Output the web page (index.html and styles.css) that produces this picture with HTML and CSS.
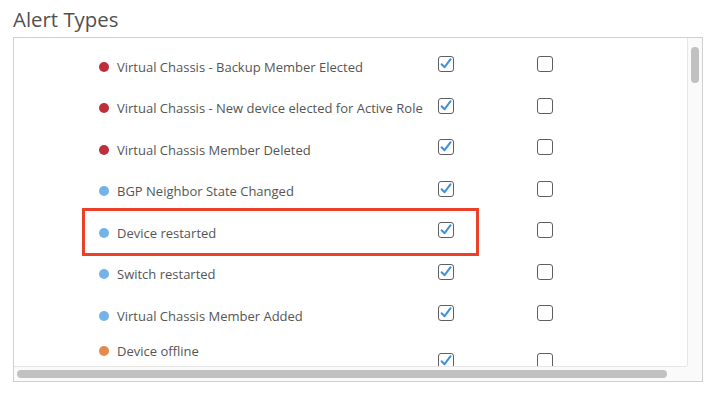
FILE: index.html
```html
<!DOCTYPE html>
<html lang="en">
<head>
    <meta charset="UTF-8">
    <meta name="viewport" content="width=device-width, initial-scale=1.0">
    <title>Alert Types</title>
    <link rel="stylesheet" href="styles.css">
</head>
<body>
    <h1 class="title">Alert Types</h1>

    <div class="panel">
        <div class="list">
            <div class="row">
                <span class="dot dot-red"></span>
                <span class="label">Virtual Chassis - Backup Member Elected</span>
                <span class="box checked"><svg viewBox="0 0 16 16"><rect x="0.5" y="0.5" width="15" height="15" rx="2.5"/><path d="M3.6 8.2 L6.6 11.2 L12.6 3.2"/></svg></span>
                <span class="box"><svg viewBox="0 0 16 16"><rect x="0.5" y="0.5" width="15" height="15" rx="2.5"/></svg></span>
            </div>
            <div class="row">
                <span class="dot dot-red"></span>
                <span class="label">Virtual Chassis - New device elected for Active Role</span>
                <span class="box checked"><svg viewBox="0 0 16 16"><rect x="0.5" y="0.5" width="15" height="15" rx="2.5"/><path d="M3.6 8.2 L6.6 11.2 L12.6 3.2"/></svg></span>
                <span class="box"><svg viewBox="0 0 16 16"><rect x="0.5" y="0.5" width="15" height="15" rx="2.5"/></svg></span>
            </div>
            <div class="row">
                <span class="dot dot-red"></span>
                <span class="label">Virtual Chassis Member Deleted</span>
                <span class="box checked"><svg viewBox="0 0 16 16"><rect x="0.5" y="0.5" width="15" height="15" rx="2.5"/><path d="M3.6 8.2 L6.6 11.2 L12.6 3.2"/></svg></span>
                <span class="box"><svg viewBox="0 0 16 16"><rect x="0.5" y="0.5" width="15" height="15" rx="2.5"/></svg></span>
            </div>
            <div class="row">
                <span class="dot dot-blue"></span>
                <span class="label">BGP Neighbor State Changed</span>
                <span class="box checked"><svg viewBox="0 0 16 16"><rect x="0.5" y="0.5" width="15" height="15" rx="2.5"/><path d="M3.6 8.2 L6.6 11.2 L12.6 3.2"/></svg></span>
                <span class="box"><svg viewBox="0 0 16 16"><rect x="0.5" y="0.5" width="15" height="15" rx="2.5"/></svg></span>
            </div>
            <div class="row highlighted">
                <span class="dot dot-blue"></span>
                <span class="label">Device restarted</span>
                <span class="box checked"><svg viewBox="0 0 16 16"><rect x="0.5" y="0.5" width="15" height="15" rx="2.5"/><path d="M3.6 8.2 L6.6 11.2 L12.6 3.2"/></svg></span>
                <span class="box"><svg viewBox="0 0 16 16"><rect x="0.5" y="0.5" width="15" height="15" rx="2.5"/></svg></span>
                <span class="highlight"></span>
            </div>
            <div class="row">
                <span class="dot dot-blue"></span>
                <span class="label">Switch restarted</span>
                <span class="box checked"><svg viewBox="0 0 16 16"><rect x="0.5" y="0.5" width="15" height="15" rx="2.5"/><path d="M3.6 8.2 L6.6 11.2 L12.6 3.2"/></svg></span>
                <span class="box"><svg viewBox="0 0 16 16"><rect x="0.5" y="0.5" width="15" height="15" rx="2.5"/></svg></span>
            </div>
            <div class="row">
                <span class="dot dot-blue"></span>
                <span class="label">Virtual Chassis Member Added</span>
                <span class="box checked"><svg viewBox="0 0 16 16"><rect x="0.5" y="0.5" width="15" height="15" rx="2.5"/><path d="M3.6 8.2 L6.6 11.2 L12.6 3.2"/></svg></span>
                <span class="box"><svg viewBox="0 0 16 16"><rect x="0.5" y="0.5" width="15" height="15" rx="2.5"/></svg></span>
            </div>
            <div class="row row-last">
                <span class="dot dot-orange"></span>
                <span class="label">Device offline</span>
                <span class="box checked"><svg viewBox="0 0 16 16"><rect x="0.5" y="0.5" width="15" height="15" rx="2.5"/><path d="M3.6 8.2 L6.6 11.2 L12.6 3.2"/></svg></span>
                <span class="box"><svg viewBox="0 0 16 16"><rect x="0.5" y="0.5" width="15" height="15" rx="2.5"/></svg></span>
            </div>
        </div>

        <div class="vscroll"><div class="vthumb"></div></div>
        <div class="hscroll"><div class="hthumb"></div></div>
        <div class="corner"></div>
    </div>
</body>
</html>
```

FILE: styles.css
```css
body {
    margin: 0;
    background: #fff;
    font-family: "Open Sans", "Liberation Sans", sans-serif;
    color: #555;
}
.title {
    margin: 0 0 4px 13px;
    padding-top: 6px;
    font-size: 20.4px;
    line-height: 27px;
    font-weight: 400;
    color: #505050;
}
.panel {
    margin-left: 13px;
    width: 688px;
    height: 343px;
    border: 1px solid #d0d0d0;
    display: grid;
    grid-template-columns: 673px 15px;
    grid-template-rows: 328px 15px;
    overflow: hidden;
}
.list {
    padding: 10px 0 0 85px;
    overflow: hidden;
}
.row {
    position: relative;
    height: 41.5px;
    display: flex;
    align-items: center;
}
.dot {
    width: 10px;
    height: 10px;
    border-radius: 50%;
    margin-right: 8px;
    margin-bottom: 4px;
    flex: none;
}
.dot-red { background: #be2f3b; }
.dot-blue { background: #74b2ea; }
.dot-orange { background: #e38a4b; }
.label {
    width: 321px;
    font-size: 13px;
    line-height: 18px;
    margin-bottom: 4px;
    white-space: nowrap;
    flex: none;
}
.box {
    align-self: flex-start;
    margin-top: 8px;
    width: 16px;
    height: 16px;
    flex: none;
}
.box svg {
    display: block;
    width: 16px;
    height: 16px;
}
.box rect {
    fill: #fff;
    stroke: #5f5f5f;
    stroke-width: 1;
}
.box path {
    fill: none;
    stroke: #3f8fe0;
    stroke-width: 2;
    stroke-linecap: round;
    stroke-linejoin: round;
}
.box.checked {
    margin-right: 83px;
}
.row-last {
    align-items: flex-start;
}
.row-last .label {
    margin-top: 3px;
}
.row-last .dot {
    margin-top: 7px;
}
.row-last .box {
    margin-top: 14px;
}
.highlight {
    position: absolute;
    left: -17px;
    top: -6px;
    width: 391px;
    height: 42px;
    border: 3px solid #ec4128;
    pointer-events: none;
}
.vscroll {
    background: #fafafa;
    border-left: 1px solid #e6e6e6;
    padding: 9px 3px 0 3px;
}
.vthumb {
    width: 8px;
    height: 36px;
    border-radius: 4px;
    background: #c1c1c1;
}
.hscroll {
    background: #fafafa;
    border-top: 1px solid #e6e6e6;
    padding: 3px 0 0 3px;
}
.hthumb {
    width: 650px;
    height: 8px;
    border-radius: 4px;
    background: #c1c1c1;
}
.corner {
    background: #fafafa;
}
```
